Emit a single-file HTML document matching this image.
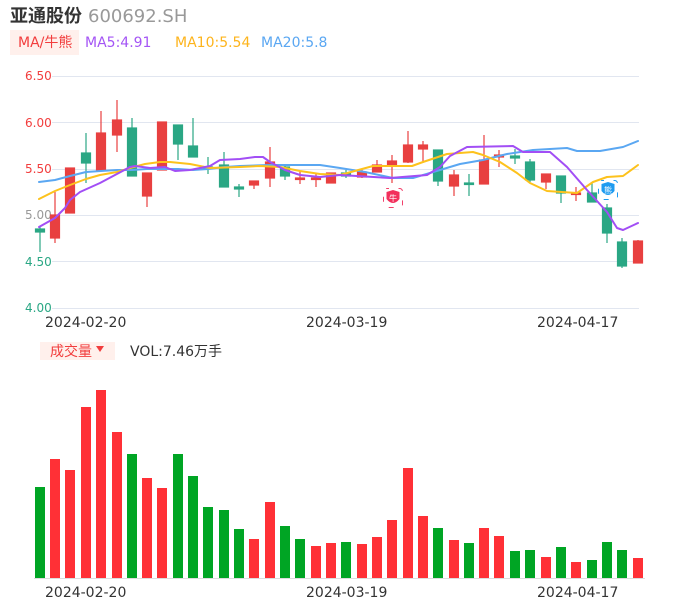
<!DOCTYPE html>
<html><head><meta charset="utf-8"><style>
body{margin:0;background:#fff;width:686px;height:606px;overflow:hidden;font-family:"Liberation Sans","Noto Sans CJK SC",sans-serif}
</style></head><body>
<svg width="686" height="606" xmlns="http://www.w3.org/2000/svg" style="position:absolute;left:0;top:0">
<text x="10" y="22" font-size="18" font-weight="bold" fill="#333" font-family="Liberation Sans,Noto Sans CJK SC,sans-serif">亚通股份</text>
<text x="88" y="22" font-size="18" fill="#999" font-family="DejaVu Sans,sans-serif">600692.SH</text>
<rect x="10" y="30" width="69" height="25" fill="#fff0ec"/>
<g font-size="14" font-family="DejaVu Sans,Noto Sans CJK SC,sans-serif">
<text x="18" y="47" fill="#f23d3d">MA/牛熊</text>
<text x="85" y="47" fill="#a455f5">MA5:4.91</text>
<text x="175" y="47" fill="#fdb41c">MA10:5.54</text>
<text x="261" y="47" fill="#5aa7f2">MA20:5.8</text>
</g>
<g stroke="#e1e6f0" stroke-width="1">
<line x1="52" y1="76.5" x2="639" y2="76.5"/><line x1="52" y1="122.5" x2="639" y2="122.5"/><line x1="52" y1="169.5" x2="639" y2="169.5"/><line x1="52" y1="215.5" x2="639" y2="215.5"/><line x1="52" y1="261.5" x2="639" y2="261.5"/><line x1="52" y1="308.5" x2="639" y2="308.5"/>
</g>
<g font-size="12" font-family="DejaVu Sans,sans-serif">
<text x="25" y="80" fill="#f23d3d">6.50</text><text x="25" y="127" fill="#f23d3d">6.00</text><text x="25" y="173" fill="#f23d3d">5.50</text><text x="25" y="219" fill="#999">5.00</text><text x="25" y="266" fill="#2aa784">4.50</text><text x="25" y="312" fill="#2aa784">4.00</text>
</g>
<g font-size="14" fill="#333" font-family="DejaVu Sans,sans-serif">
<text x="45" y="327">2024-02-20</text><text x="306" y="327">2024-03-19</text><text x="537" y="327">2024-04-17</text>
<text x="45" y="597">2024-02-20</text><text x="306" y="597">2024-03-19</text><text x="537" y="597">2024-04-17</text>
</g>
<g id="c" stroke-width="1.2">
<g stroke="#2aa784" fill="#2aa784">
<line x1="40" y1="227" x2="40" y2="252"/><rect x="35.5" y="229" width="9" height="3"/>
<line x1="86" y1="133" x2="86" y2="183"/><rect x="81.5" y="153" width="9" height="10"/>
<line x1="132" y1="118" x2="132" y2="176"/><rect x="127.5" y="128" width="9" height="48"/>
<line x1="178" y1="125" x2="178" y2="160"/><rect x="173.5" y="125" width="9" height="19"/>
<line x1="193" y1="118" x2="193" y2="157"/><rect x="188.5" y="146" width="9" height="11"/>
<line x1="208" y1="157" x2="208" y2="174"/><rect x="203.5" y="167" width="9" height="1.5"/>
<line x1="224" y1="152" x2="224" y2="187"/><rect x="219.5" y="165" width="9" height="22"/>
<line x1="239" y1="184" x2="239" y2="197"/><rect x="234.5" y="187" width="9" height="2"/>
<line x1="285" y1="166" x2="285" y2="180"/><rect x="280.5" y="167" width="9" height="9"/>
<line x1="346" y1="170" x2="346" y2="178"/><rect x="341.5" y="173" width="9" height="3"/>
<line x1="438" y1="150" x2="438" y2="186"/><rect x="433.5" y="150" width="9" height="31"/>
<line x1="469" y1="174" x2="469" y2="196"/><rect x="464.5" y="183" width="9" height="1.5"/>
<line x1="515" y1="149" x2="515" y2="164"/><rect x="510.5" y="156" width="9" height="2"/>
<line x1="530" y1="159" x2="530" y2="182"/><rect x="525.5" y="162" width="9" height="18"/>
<line x1="561" y1="176" x2="561" y2="203"/><rect x="556.5" y="176" width="9" height="17"/>
<line x1="592" y1="183" x2="592" y2="202"/><rect x="587.5" y="193" width="9" height="9"/>
<line x1="607" y1="204" x2="607" y2="243"/><rect x="602.5" y="208" width="9" height="25"/>
<line x1="622" y1="238" x2="622" y2="268"/><rect x="617.5" y="242" width="9" height="24"/>
</g>
<g stroke="#e84040" fill="#e84040">
<line x1="55" y1="192" x2="55" y2="243"/><rect x="50.5" y="215" width="9" height="23"/>
<line x1="70" y1="168" x2="70" y2="213"/><rect x="65.5" y="168" width="9" height="45"/>
<line x1="101" y1="111" x2="101" y2="170"/><rect x="96.5" y="133" width="9" height="37"/>
<line x1="117" y1="100" x2="117" y2="152"/><rect x="112.5" y="120" width="9" height="15"/>
<line x1="147" y1="173" x2="147" y2="207"/><rect x="142.5" y="173" width="9" height="23"/>
<line x1="162" y1="122" x2="162" y2="170"/><rect x="157.5" y="122" width="9" height="48"/>
<line x1="254" y1="181" x2="254" y2="189"/><rect x="249.5" y="181" width="9" height="4"/>
<line x1="270" y1="147" x2="270" y2="187"/><rect x="265.5" y="162" width="9" height="16"/>
<line x1="300" y1="171" x2="300" y2="184"/><rect x="295.5" y="178" width="9" height="1.5"/>
<line x1="316" y1="173" x2="316" y2="187"/><rect x="311.5" y="178" width="9" height="1.5"/>
<line x1="331" y1="173" x2="331" y2="183"/><rect x="326.5" y="173" width="9" height="10"/>
<line x1="362" y1="169" x2="362" y2="178"/><rect x="357.5" y="172" width="9" height="5"/>
<line x1="377" y1="160" x2="377" y2="172"/><rect x="372.5" y="165" width="9" height="7"/>
<line x1="392" y1="155" x2="392" y2="183"/><rect x="387.5" y="161" width="9" height="4"/>
<line x1="408" y1="131" x2="408" y2="163"/><rect x="403.5" y="145" width="9" height="17"/>
<line x1="423" y1="141" x2="423" y2="163"/><rect x="418.5" y="145" width="9" height="4"/>
<line x1="454" y1="170" x2="454" y2="196"/><rect x="449.5" y="175" width="9" height="11"/>
<line x1="484" y1="135" x2="484" y2="184"/><rect x="479.5" y="160" width="9" height="24"/>
<line x1="499" y1="150" x2="499" y2="167"/><rect x="494.5" y="155" width="9" height="2"/>
<line x1="546" y1="174" x2="546" y2="189"/><rect x="541.5" y="174" width="9" height="8"/>
<line x1="576" y1="187" x2="576" y2="201"/><rect x="571.5" y="193" width="9" height="1.5"/>
<line x1="638" y1="240" x2="638" y2="263"/><rect x="633.5" y="241" width="9" height="22"/>
</g>
</g>
<g fill="none" stroke-width="2" stroke-linejoin="round" stroke-linecap="round">
<polyline stroke="#5aa7f2" points="39,182 55,180 70,176 86,172 101,171 117,170 132,170 147,169 162,169 178,169 193,170 208,169 225,167 240,166 270,165 300,165 320,165 340,168 365,172 393,178 413,178 440,170 460,164 483,160 507,154 533,150 567,148 577,151 600,151 623,147 638,141"/>
<polyline stroke="#fdc21c" points="39,199 55,191 70,185 86,179 100,175 117,172 130,168 145,164 160,162 170,162 190,164 210,168 240,167 260,166 280,167 300,171 320,174 340,175 373,166 412,166 423,162 447,154 473,152 483,155 500,162 517,173 530,183 547,191 577,193 593,182 607,177 623,176 638,165"/>
<polyline stroke="#a24ef5" points="39,227 55,218 65,208 70,200 80,192 100,183 115,175 130,167 135,166 150,168 165,167 175,171 190,170 210,166 220,160 240,159 255,157 263,157 270,162 285,170 300,175 320,177 340,175 390,178 427,175 440,167 450,156 467,147 513,146 523,152 550,152 567,167 587,190 607,212 617,228 623,230 638,223"/>
</g>
<g>
<rect x="383.5" y="188.5" width="19" height="19" rx="3" fill="none" stroke="#f2406a" stroke-dasharray="5 9.5" stroke-dashoffset="2.5"/>
<path d="M386.5 192 L393 190 L399.5 192 L399.5 199 Q393 207 386.5 199 Z" fill="#f2305c"/>
<text x="393" y="201" font-size="8" fill="#fff" text-anchor="middle">牛</text>
<rect x="598.5" y="180.5" width="19" height="19" rx="3" fill="none" stroke="#1e9bf0" stroke-dasharray="5 9.5" stroke-dashoffset="2.5"/>
<path d="M601.5 184 L608 182 L614.5 184 L614.5 191 Q608 199 601.5 191 Z" fill="#1e9bf0"/>
<text x="608" y="193" font-size="8" fill="#fff" text-anchor="middle">熊</text>
</g>
<rect x="40" y="342" width="75" height="18" fill="#fff0ec"/>
<text x="50" y="356" font-size="14" fill="#f23d3d" font-family="Noto Sans CJK SC,sans-serif">成交量</text>
<path d="M96 346 L104 346 L100 352 Z" fill="#f23d3d"/>
<text x="130" y="356" font-size="14" fill="#333" font-family="DejaVu Sans,Noto Sans CJK SC,sans-serif">VOL:7.46万手</text>
<line x1="34" y1="578.5" x2="645" y2="578.5" stroke="#ddd"/>
<g fill="#00a524">
<rect x="35" y="487" width="10" height="91"/><rect x="127" y="454" width="10" height="124"/><rect x="173" y="454" width="10" height="124"/><rect x="188" y="476" width="10" height="102"/><rect x="203" y="507" width="10" height="71"/><rect x="219" y="510" width="10" height="68"/><rect x="234" y="529" width="10" height="49"/><rect x="280" y="526" width="10" height="52"/><rect x="295" y="539" width="10" height="39"/><rect x="341" y="542" width="10" height="36"/><rect x="433" y="528" width="10" height="50"/><rect x="464" y="543" width="10" height="35"/><rect x="510" y="551" width="10" height="27"/><rect x="525" y="550" width="10" height="28"/><rect x="556" y="547" width="10" height="31"/><rect x="587" y="560" width="10" height="18"/><rect x="602" y="542" width="10" height="36"/><rect x="617" y="550" width="10" height="28"/>
</g>
<g fill="#ff3036">
<rect x="50" y="459" width="10" height="119"/><rect x="65" y="470" width="10" height="108"/><rect x="81" y="407" width="10" height="171"/><rect x="96" y="390" width="10" height="188"/><rect x="112" y="432" width="10" height="146"/><rect x="142" y="478" width="10" height="100"/><rect x="157" y="488" width="10" height="90"/><rect x="249" y="539" width="10" height="39"/><rect x="265" y="502" width="10" height="76"/><rect x="311" y="546" width="10" height="32"/><rect x="326" y="543" width="10" height="35"/><rect x="357" y="544" width="10" height="34"/><rect x="372" y="537" width="10" height="41"/><rect x="387" y="520" width="10" height="58"/><rect x="403" y="468" width="10" height="110"/><rect x="418" y="516" width="10" height="62"/><rect x="449" y="540" width="10" height="38"/><rect x="479" y="528" width="10" height="50"/><rect x="494" y="536" width="10" height="42"/><rect x="541" y="557" width="10" height="21"/><rect x="571" y="562" width="10" height="16"/><rect x="633" y="558" width="10" height="20"/>
</g>
</svg>
</body></html>
